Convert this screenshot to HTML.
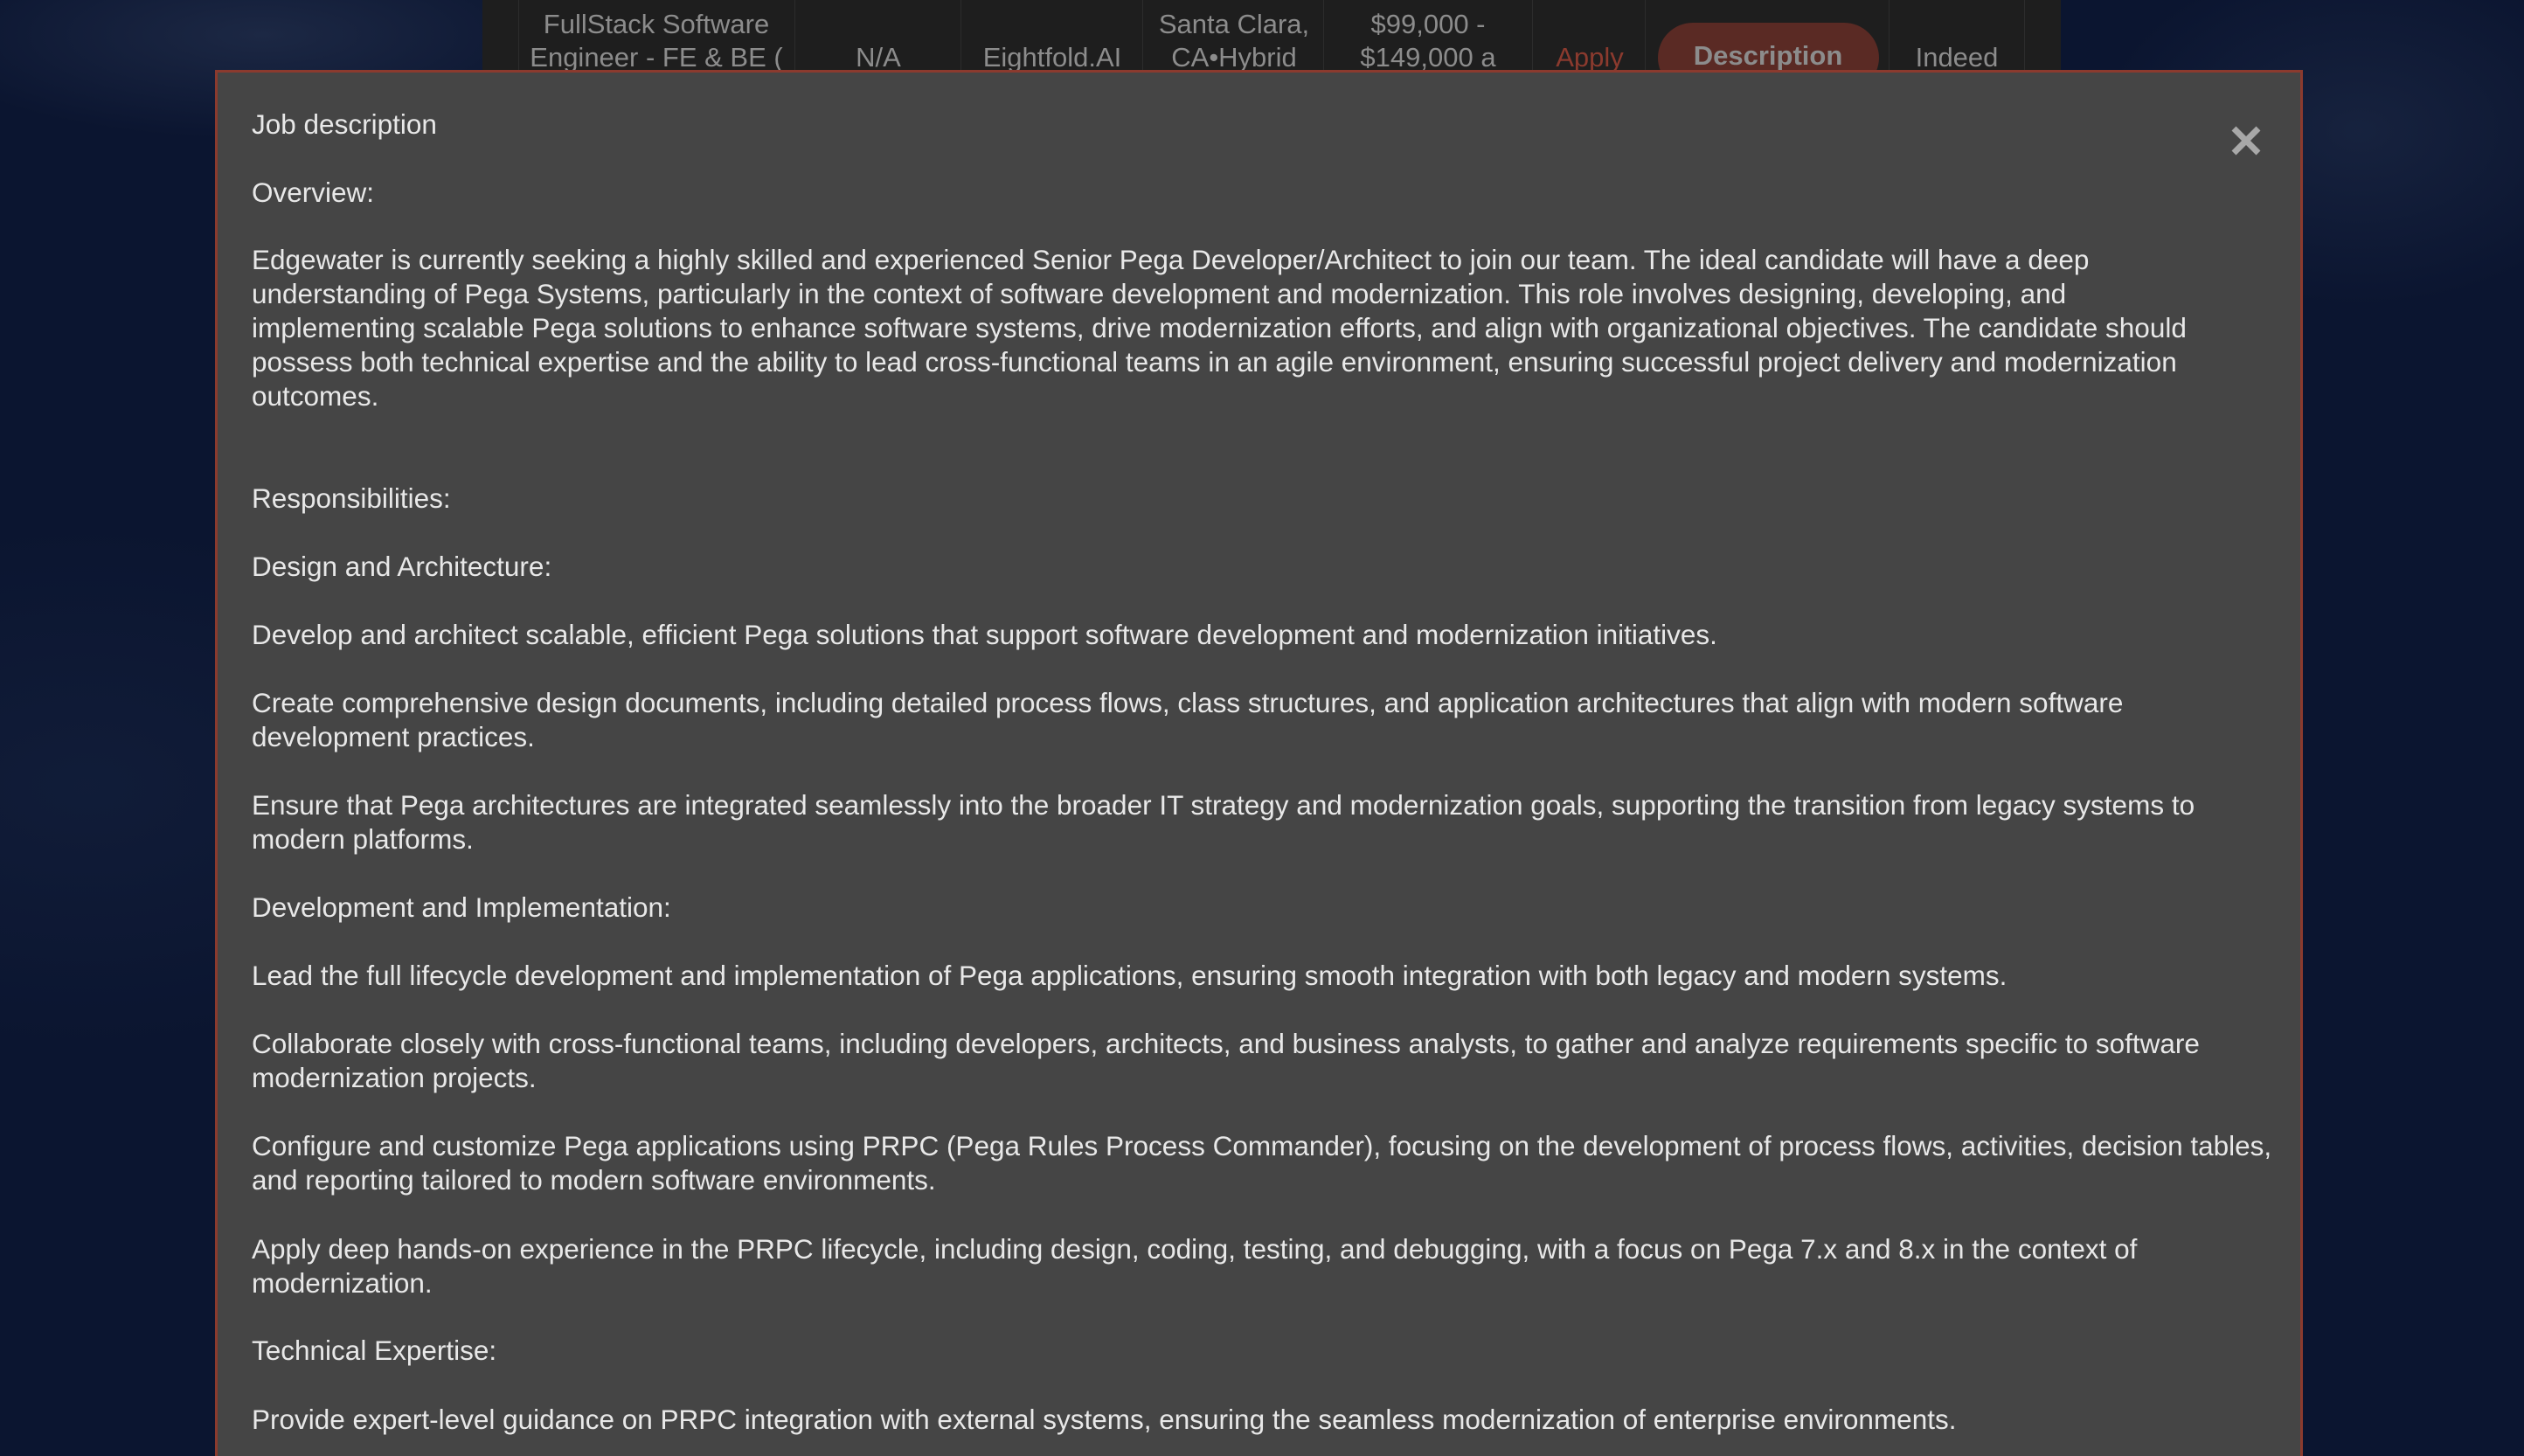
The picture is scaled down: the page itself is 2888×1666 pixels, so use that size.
<!DOCTYPE html>
<html><head><meta charset="utf-8"><style>
*{margin:0;padding:0;box-sizing:border-box}
html,body{width:2888px;height:1666px;overflow:hidden}
body{background:#0b1530;font-family:"Liberation Sans",sans-serif;position:relative}
.bgtex{position:absolute;inset:0;background:
radial-gradient(ellipse 400px 120px at 300px 40px,rgba(60,75,105,.35),transparent),
radial-gradient(ellipse 300px 200px at 2700px 150px,rgba(50,65,95,.3),transparent),
radial-gradient(ellipse 500px 300px at 100px 900px,rgba(30,45,75,.3),transparent);}
.hdr{position:absolute;left:552px;top:0;width:1806px;height:82px;background:#1e1e1e}
.col{position:absolute;top:0;height:82px;border-left:1px solid #2c2c2c}
.c{position:absolute;color:#8c8c8c;font-size:31px;line-height:38px;text-align:center;white-space:nowrap;transform:translateX(-50%)}
.pill{position:absolute;left:1897px;top:26px;width:253px;height:80px;border-radius:40px;background:#5a2a24}
.modal{position:absolute;left:246px;top:80px;width:2389px;height:1620px;background:#454545;border:3px solid #8b3a2e}
.l{position:absolute;left:288px;color:#e8e8e8;font-size:31.5px;line-height:38px;white-space:nowrap}
.x{position:absolute;left:2552px;top:143px;width:36px;height:36px}
</style></head><body>
<div class="bgtex"></div>
<div class="hdr"></div>
<div class="col" style="left:593px"></div><div class="col" style="left:909px"></div><div class="col" style="left:1099px"></div><div class="col" style="left:1307px"></div><div class="col" style="left:1514px"></div><div class="col" style="left:1753px"></div><div class="col" style="left:1882px"></div><div class="col" style="left:2161px"></div><div class="col" style="left:2316px"></div>
<div class="pill"></div>
<div class="c" style="left:751px;top:9px">FullStack Software</div>
<div class="c" style="left:751px;top:47px">Engineer - FE &amp; BE (</div>
<div class="c" style="left:1005px;top:47px">N/A</div>
<div class="c" style="left:1204px;top:47px">Eightfold.AI</div>
<div class="c" style="left:1412px;top:9px">Santa Clara,</div>
<div class="c" style="left:1412px;top:47px">CA•Hybrid</div>
<div class="c" style="left:1634px;top:9px">$99,000 -</div>
<div class="c" style="left:1634px;top:47px">$149,000 a</div>
<div class="c" style="left:1819px;top:47px;color:#8b3a2e">Apply</div>
<div class="c" style="left:2023px;top:45px;font-weight:bold">Description</div>
<div class="c" style="left:2239px;top:47px">Indeed</div>
<div class="modal"></div>
<svg class="x" viewBox="0 0 36 36"><path d="M4 4L32 32M32 4L4 32" stroke="#a8a8a8" stroke-width="7"/></svg>
<div class="l" style="top:123px">Job description</div>
<div class="l" style="top:201px">Overview:</div>
<div class="l" style="top:278px">Edgewater is currently seeking a highly skilled and experienced Senior Pega Developer/Architect to join our team. The ideal candidate will have a deep</div>
<div class="l" style="top:317px">understanding of Pega Systems, particularly in the context of software development and modernization. This role involves designing, developing, and</div>
<div class="l" style="top:356px">implementing scalable Pega solutions to enhance software systems, drive modernization efforts, and align with organizational objectives. The candidate should</div>
<div class="l" style="top:395px">possess both technical expertise and the ability to lead cross-functional teams in an agile environment, ensuring successful project delivery and modernization</div>
<div class="l" style="top:434px">outcomes.</div>
<div class="l" style="top:551px">Responsibilities:</div>
<div class="l" style="top:629px">Design and Architecture:</div>
<div class="l" style="top:707px">Develop and architect scalable, efficient Pega solutions that support software development and modernization initiatives.</div>
<div class="l" style="top:785px">Create comprehensive design documents, including detailed process flows, class structures, and application architectures that align with modern software</div>
<div class="l" style="top:824px">development practices.</div>
<div class="l" style="top:902px">Ensure that Pega architectures are integrated seamlessly into the broader IT strategy and modernization goals, supporting the transition from legacy systems to</div>
<div class="l" style="top:941px">modern platforms.</div>
<div class="l" style="top:1019px">Development and Implementation:</div>
<div class="l" style="top:1097px">Lead the full lifecycle development and implementation of Pega applications, ensuring smooth integration with both legacy and modern systems.</div>
<div class="l" style="top:1175px">Collaborate closely with cross-functional teams, including developers, architects, and business analysts, to gather and analyze requirements specific to software</div>
<div class="l" style="top:1214px">modernization projects.</div>
<div class="l" style="top:1292px">Configure and customize Pega applications using PRPC (Pega Rules Process Commander), focusing on the development of process flows, activities, decision tables,</div>
<div class="l" style="top:1331px">and reporting tailored to modern software environments.</div>
<div class="l" style="top:1410px">Apply deep hands-on experience in the PRPC lifecycle, including design, coding, testing, and debugging, with a focus on Pega 7.x and 8.x in the context of</div>
<div class="l" style="top:1449px">modernization.</div>
<div class="l" style="top:1526px">Technical Expertise:</div>
<div class="l" style="top:1605px">Provide expert-level guidance on PRPC integration with external systems, ensuring the seamless modernization of enterprise environments.</div>
</body></html>
